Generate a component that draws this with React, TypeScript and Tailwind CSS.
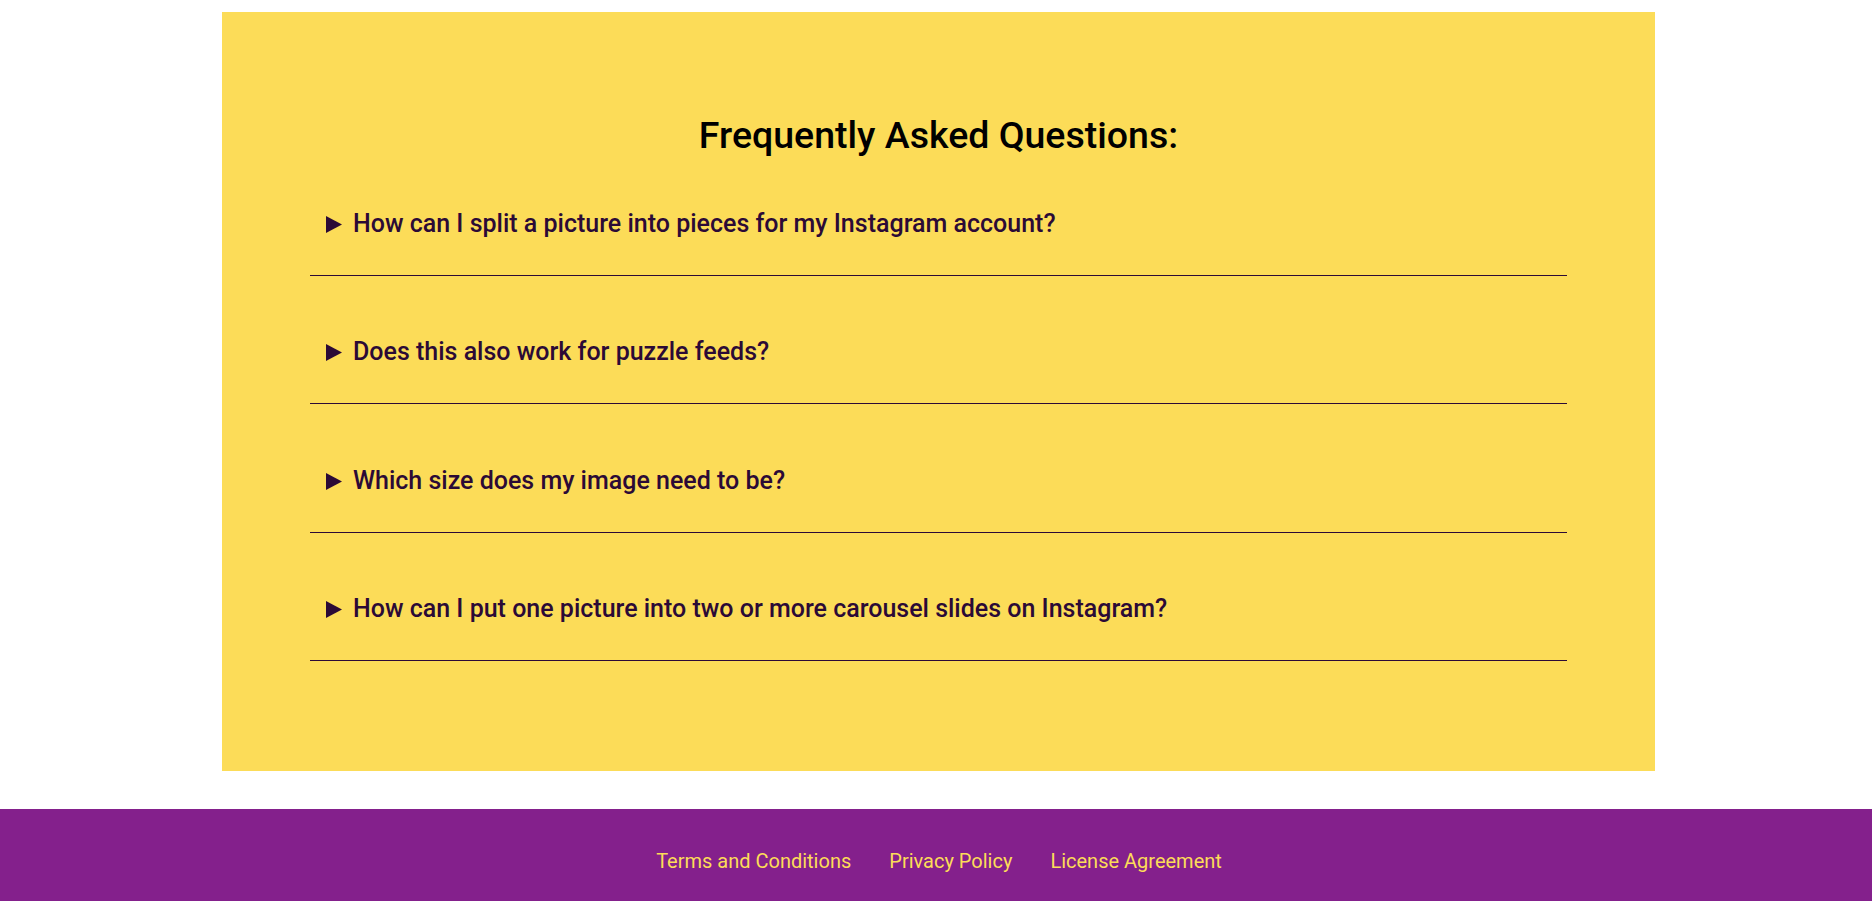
const QUESTIONS = [
  'How can I split a picture into pieces for my Instagram account?',
  'Does this also work for puzzle feeds?',
  'Which size does my image need to be?',
  'How can I put one picture into two or more carousel slides on Instagram?',
];

const ITEM_PADDING = ['pt-[52px]', 'pt-[61px]', 'pt-[62px]', 'pt-[61px]'];

function Arrow() {
  return (
    <svg width="16" height="17" viewBox="0 0 16 17" className="shrink-0">
      <path d="M0 0 L16 8.5 L0 17 Z" fill="#2b0a36" />
    </svg>
  );
}

function FaqItem({ text, index }: { text: string; index: number }) {
  return (
    <div className={`${ITEM_PADDING[index]} pb-[36px] border-b border-[#2b0a36]`}>
      <div className="flex items-center gap-[11px] pl-[16px] h-[30px]">
        <Arrow />
        <span className="text-[25px] leading-[30px] font-medium text-[#2b0a36]">{text}</span>
      </div>
    </div>
  );
}

export default function App() {
  return (
    <div className="min-h-screen bg-white" style={{ fontFamily: 'Roboto, "Liberation Sans", sans-serif' }}>
      <div className="flex justify-center pl-[5px] pt-[12px]">
        <section className="w-[1433px] bg-[#fcdc58] px-[88px] pt-[102px] pb-[110px]">
          <h2 className="text-center text-[37.5px] leading-[43px] font-medium text-black">
            Frequently Asked Questions:
          </h2>
          {QUESTIONS.map((q, i) => (
            <FaqItem key={q} text={q} index={i} />
          ))}
        </section>
      </div>

      <footer className="mt-[38px] bg-[#84208c] pl-[6px] pt-[40px] pb-[40px]">
        <nav className="flex justify-center gap-[38px] text-[20px] leading-[24px] text-[#fcdc58]">
          <a href="#">Terms and Conditions</a>
          <a href="#">Privacy Policy</a>
          <a href="#">License Agreement</a>
        </nav>
      </footer>
    </div>
  );
}
